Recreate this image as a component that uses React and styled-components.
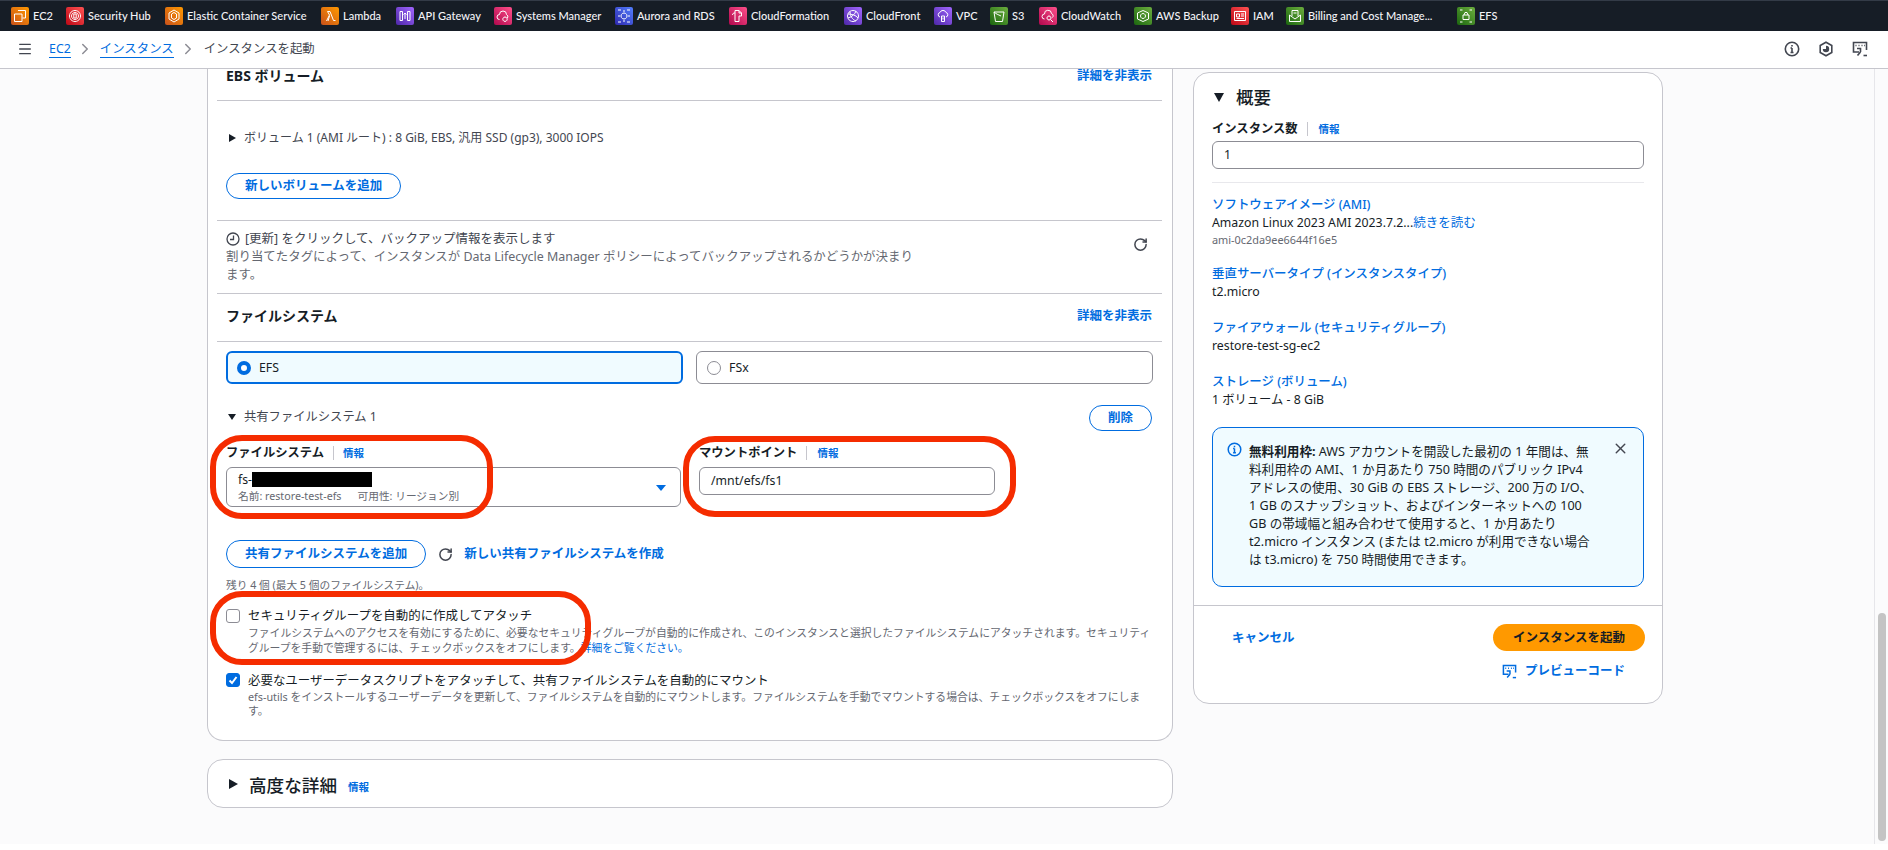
import React from "react";
import styled, { createGlobalStyle } from "styled-components";
import { RotateCw, X, Menu, ChevronRight } from "lucide-react";

const FONT = `"Noto Sans", "Noto Sans CJK JP", sans-serif`;
const Global = createGlobalStyle`
  html, body { margin: 0; padding: 0; background: #fff; }
  body { font-family: ${FONT}; color: #161d26; font-size: 12.3px; line-height: 18px; }
  * { box-sizing: border-box; }
`;

const Page = styled.div`position: relative; width: 1888px; height: 850px; overflow: hidden; background: #fff;`;
const TopBar = styled.div`display: flex; height: 31px; background: #161d26; border-top: 1px solid #333b47; padding-left: 11px; align-items: center;`;
const Service = styled.div`display: flex; align-items: center; gap: 4px; width: ${p => p.$w}px; flex: none; color: #f3f3f7; font: 500 11px/18px Lato, "Noto Sans", sans-serif; white-space: nowrap;`;
const Tile = styled.span`width: 18px; height: 18px; flex: none; border-radius: 2px; display: flex; align-items: center; justify-content: center; background: linear-gradient(45deg, ${p => p.$a}, ${p => p.$b});`;
const Crumbs = styled.div`display: flex; align-items: center; height: 38px; border-bottom: 1px solid #c6c6cd; padding: 0 20px 2px 17px; font-size: 12.4px;`;
const Burger = styled(Menu)`width: 16px; height: 16px; color: #424650; margin-right: 16px;`;
const Crumb = styled.a`color: #006ce0; border-bottom: 1px solid #006ce0; line-height: 17px;`;
const Sep = styled(ChevronRight)`width: 18px; height: 18px; color: #8c8c94; margin: 0 5.5px;`;
const Current = styled.span`color: #424650; margin-left: 1px;`;
const Tools = styled.div`margin-left: auto; display: flex; gap: 18px; color: #424650;`;

const Canvas = styled.div`position: relative; height: 775px; background: #fbfbfc; display: grid; grid-template-columns: 966px 470px; column-gap: 20px; padding-left: 207px; align-items: start;`;
const Track = styled.div`position: absolute; top: 0; right: 0; bottom: 0; width: 14px; border-left: 1px solid #e6e6ea; background: #fbfbfc;`;
const Thumb = styled.div`position: absolute; right: 2px; bottom: 3px; width: 8px; height: 228px; border-radius: 4px; background: #c4c4c4;`;
const Column = styled.div`display: flex; flex-direction: column; gap: 18px;`;
const LeftCard = styled.div`padding: 0 10px 0 9px; height: 672px; background: #fff; border: 1px solid #c6c6cd; border-top: none; border-radius: 0 0 16px 16px;`;
const Section = styled.div`padding: ${p => p.$pad}; border-bottom: ${p => (p.$line ? "1px solid #c6c6cd" : "none")}; height: ${p => p.$h}px;`;
const Between = styled.div`display: flex; justify-content: space-between; align-items: center;`;
const HeadRow = styled(Between)`height: 14px; line-height: 14px;`;
const H3 = styled.div`font-size: 14px; font-weight: 700; line-height: 14px; color: #161d26;`;
const Link = styled.a`color: #006ce0; font-size: 12.5px; font-weight: ${p => p.$bold ? 700 : 400}; white-space: nowrap;`;
const Disc = styled.div`display: flex; align-items: center; gap: 8px; color: #424650; font-size: ${p => p.$size || "12.3px"}; height: 18px; padding-left: ${p => p.$indent || 3}px;`;
const RightTri = styled.span`width: 0; height: 0; flex: none; border-top: ${p => p.$h / 2}px solid transparent; border-bottom: ${p => p.$h / 2}px solid transparent; border-left: ${p => p.$w}px solid #161d26;`;
const DownTri = styled.span`width: 0; height: 0; flex: none; border-left: ${p => p.$w / 2}px solid transparent; border-right: ${p => p.$w / 2}px solid transparent; border-top: ${p => p.$h}px solid #161d26;`;
const Pill = styled.button`display: block; height: ${p => p.$h || 26}px; margin-top: ${p => p.$mt || 0}px; padding: 0 ${p => p.$px || 18}px; border: 1px solid #006ce0; border-radius: 20px; background: #fff; color: #006ce0; font: 700 12.5px/16px ${FONT}; white-space: nowrap;`;
const Grey = styled.div`color: #656871; font-size: ${p => p.$size || "12.45px"}; line-height: ${p => p.$lh || "18px"}; white-space: nowrap; margin-top: ${p => p.$mt || 0}px;`;
const Row = styled.div`display: flex; align-items: center; color: #424650; gap: 5px; height: 18px; font-size: 12.5px;`;
const BackupRefresh = styled(RotateCw)`width: 15px; height: 15px; color: #424650; stroke-width: 2.4px; margin: 7px 4px 0 0; align-self: flex-start;`;
const Tiles = styled.div`display: grid; grid-template-columns: 457px 457px; column-gap: 13px;`;
const Option = styled.div`display: flex; align-items: center; gap: 8px; height: 33px; padding-left: ${p => p.$on ? 9 : 10}px; border-radius: 6px; background: ${p => p.$on ? "#f0fbff" : "#fff"}; border: ${p => p.$on ? "2px solid #006ce0" : "1px solid #8c8c94"}; color: #161d26;`;
const Radio = styled.span`width: 14px; height: 14px; flex: none; border-radius: 50%; background: #fff; border: ${p => p.$on ? "4.5px solid #006ce0" : "1px solid #8c8c94"};`;
const FileHead = styled(Between)`margin-top: 21px;`;
const FileTitle = styled(Disc)`margin-top: -2px;`;
const Fields = styled.div`display: grid; grid-template-columns: 455px 296px; column-gap: 18px; margin-top: 13px;`;
const LabelRow = styled.div`display: flex; align-items: center; height: 18px; margin-bottom: ${p => p.$mb || 5}px;`;
const Label = styled.span`font-size: 12.3px; font-weight: 700; color: #161d26;`;
const Info = styled.a`margin-left: 9px; padding-left: ${p => p.$pl || 11}px; border-left: 1px solid #c6c6cd; color: #006ce0; font-size: 10.5px; font-weight: 700; line-height: 14px;`;
const Select = styled.div`position: relative; height: 40px; border: 1px solid #8c8c94; border-radius: 6px; background: #fff; padding: 3px 0 0 11px;`;
const Value = styled.div`color: #161d26; display: flex; align-items: center; height: 17px; font-size: 12.3px;`;
const Redact = styled.span`display: inline-block; width: 120px; height: 15px; background: #000;`;
const Tag = styled.span`margin-right: 16px;`;
const Caret = styled.span`position: absolute; right: 14px; top: 17px; border-left: 5px solid transparent; border-right: 5px solid transparent; border-top: 6px solid #006ce0;`;
const Input = styled.div`height: 28px; border: 1px solid #8c8c94; border-radius: 6px; background: #fff; padding: 0 11px; line-height: 26px; color: #161d26; font-size: 12.3px;`;
const Actions = styled.div`display: flex; align-items: center; margin-top: 33px;`;
const Refresh = styled(RotateCw)`width: 15px; height: 15px; color: #424650; stroke-width: 2.4px; margin: 0 11px 0 12px;`;
const Check = styled.div`display: flex; gap: 8px; margin-top: ${p => p.$mt}px;`;
const Box = styled.span`width: 14px; height: 14px; margin-top: ${p => p.$mt || 0}px; flex: none; border-radius: 3px; display: flex; align-items: center; justify-content: center; background: ${p => p.$on ? "#006ce0" : "#fff"}; border: 1px solid ${p => p.$on ? "#006ce0" : "#8c8c94"};`;
const CheckText = styled.div`color: #161d26; font-size: 12.45px; line-height: 15px; white-space: nowrap;`;
const Small = styled.div`color: #656871; font-size: 10.8px; line-height: ${p => p.$lh || 15}px; margin-top: 2px;`;
const SmallLink = styled.a`color: #006ce0;`;
const Collapsed = styled.div`height: 49px; display: flex; align-items: center; padding: 0 0 0 21px; gap: 11px; background: #fff; border: 1px solid #c6c6cd; border-radius: 16px;`;
const H2 = styled.span`font-size: 17.6px; line-height: 22px; font-weight: 500; color: #161d26; margin-top: 2px;`;
const Tiny = styled.a`color: #006ce0; font-size: 10.5px; font-weight: 700; margin-top: 7px;`;

const RightCard = styled.div`margin-top: 3px; height: 632px; background: #fff; border: 1px solid #c6c6cd; border-radius: 16px; display: flex; flex-direction: column;`;
const Summary = styled.div`padding: 13px 18px 0; height: 533px; border-bottom: 1px solid #c6c6cd;`;
const SummaryHead = styled.div`display: flex; align-items: center; gap: 12px; padding-left: 2px; height: 22px; margin-bottom: 12px;`;
const SumTitle = styled.span`font-size: 17.5px; font-weight: 500; color: #161d26; line-height: 22px;`;
const Rule = styled.div`height: 1px; background: #e8e8ec; margin: 13px 0 13px;`;
const Spec = styled.div`margin-bottom: ${p => p.$mb}px;`;
const SpecLink = styled.a`display: block; color: #006ce0; font-weight: 500; font-size: 12.45px; line-height: 18px;`;
const SpecValue = styled.div`color: #161d26; font-size: 12.3px; line-height: 18px; white-space: nowrap;`;
const Alert = styled.div`position: relative; display: flex; gap: 7px; height: 160px; margin-top: 18px; padding: 15px 0 0 14px; background: #f0fbff; border: 1px solid #006ce0; border-radius: 10px;`;
const AlertIcon = styled.span`display: block; height: 15px; margin-top: -1px;`;
const AlertText = styled.div`color: #161d26; font-size: 12.6px; line-height: 18px; white-space: nowrap;`;
const Close = styled(X)`position: absolute; right: 14px; top: 12px; width: 17px; height: 17px; color: #424650; stroke-width: 2px;`;
const Foot = styled.div`padding: 18px 17px 0 38px;`;
const Launch = styled.button`height: 27px; width: 152px; border: none; border-radius: 14px; background: #ff9900; color: #161d26; font: 700 12.5px/16px ${FONT};`;
const Preview = styled.div`display: flex; align-items: center; justify-content: flex-end; gap: 8px; padding-right: 20px; margin-top: 11px;`;
const Ring = styled.div`position: absolute; left: ${p => p.$x}px; top: ${p => p.$y}px; width: ${p => p.$w}px; height: ${p => p.$h}px; border: 6px solid #f52c00; border-radius: 32px;`;

const Glyph = ({ d }) => (
  <svg width="14" height="14" viewBox="0 0 14 14" fill="none" stroke="#fff" strokeWidth="1"><path d={d} /></svg>
);
const glyph = {
  ec2: "M5 1.5h7.5V9H9.5M1.5 5H9v7.5H1.5z",
  hub: "M7 1.5a5.5 5.5 0 1 0 .01 0M7 3.5a3.5 3.5 0 1 0 .01 0M5.8 5h2.4v4H5.8z",
  ecs: "M7 1L12 4v6l-5 3-5-3V4zM7 3.5L9.5 5v4L7 10.5 4.5 9V5z",
  lam: "M3.5 12L6.5 6 4.5 2.5H7L10.5 11.5h2M6.5 7L5 12",
  api: "M2 2.5h2.5v9H2zM9.5 2.5H12v9H9.5zM7 4v6M5.5 5.5L7 4l1.5 1.5",
  sm: "M3.5 10.5a2.5 2.5 0 0 1 0-5 3.5 3.5 0 0 1 7 0 2.5 2.5 0 0 1 1 3.5M9 8a2.2 2.2 0 1 0 .01 0",
  aur: "M1 1h3M10 1h3M1 13h3M10 13h3M7 4a3 3 0 1 0 .01 0M1 7h2M11 7h2M7 1v2M7 11v2",
  cfn: "M4 1.5h4l2.5 2.5v3H8v5.5H4zM1.5 6a2 2 0 0 1 2.5-2M8 1.5V4h2.5",
  cfr: "M7 1.5a5.5 5.5 0 1 0 .01 0M2 9c4-1 7-4 8-7M4 2.5c0 4 2 8 6 9.5M2 5c3 0 8 1 10 4",
  vpc: "M4 8a2.3 2.3 0 0 1 0-4.5 3.2 3.2 0 0 1 6 0A2.3 2.3 0 0 1 10 8M5.5 7h3v5.5h-3zM7 8.5v2",
  s3: "M2 3h10l-1.5 9.5h-7zM2 3c2 2 4 2.5 7 4",
  cw: "M3.5 10a2.5 2.5 0 0 1 0-5 3.5 3.5 0 0 1 7-.5 2.5 2.5 0 0 1 1 4M8 7a2 2 0 1 0 .01 0M9.5 10.5l2.5 2.5",
  bak: "M7 1.5L12.5 4v6L7 12.5 1.5 10V4zM7 4.5a2.5 2.5 0 1 0 .01 0",
  iam: "M1.5 2.5h11v9h-11zM3.5 5h3v3h-3zM8 5h3M8 7h3M3.5 9.5h7.5",
  bil: "M1.5 6v6.5h11V6L7 10zM4 7V1.5h6V7M5.5 4h3",
  efs: "M1 1h2.5M10.5 1H13M1 13h2.5M10.5 13H13M4 6h6v4.5H4zM5 6l1-2.5h2L9 6",
};
const services = [
  ["EC2", 55, "#c8511b", "#ff9900", "ec2"],
  ["Security Hub", 99, "#bd0816", "#ff5252", "hub"],
  ["Elastic Container Service", 156, "#c8511b", "#ff9900", "ecs"],
  ["Lambda", 75, "#c8511b", "#ff9900", "lam"],
  ["API Gateway", 98, "#4d27a8", "#a166ff", "api"],
  ["Systems Manager", 121, "#b0084d", "#ff4f8b", "sm"],
  ["Aurora and RDS", 114, "#2e27ad", "#527fff", "aur"],
  ["CloudFormation", 115, "#b0084d", "#ff4f8b", "cfn"],
  ["CloudFront", 90, "#4d27a8", "#a166ff", "cfr"],
  ["VPC", 56, "#4d27a8", "#a166ff", "vpc"],
  ["S3", 49, "#1b660f", "#6cae3e", "s3"],
  ["CloudWatch", 95, "#b0084d", "#ff4f8b", "cw"],
  ["AWS Backup", 97, "#1b660f", "#6cae3e", "bak"],
  ["IAM", 55, "#bd0816", "#ff5252", "iam"],
  ["Billing and Cost Manage...", 171, "#1b660f", "#6cae3e", "bil"],
  ["EFS", 50, "#1b660f", "#6cae3e", "efs"],
];

const InfoCircle = ({ size = 16, color = "#424650" }) => (
  <svg width={size} height={size} viewBox="0 0 16 16" fill="none" stroke={color} strokeWidth="1.6">
    <circle cx="8" cy="8" r="6.7" /><path d="M8 7v4.5M6.5 11.5h3M6.5 7H8" /><path d="M8 4v1.6" />
  </svg>
);
const Hex = () => (
  <svg width="16" height="16" viewBox="0 0 16 16" fill="none" stroke="#424650" strokeWidth="1.6">
    <path d="M8 1.2l5.8 3.3v7L8 14.8l-5.8-3.3v-7z" /><path d="M8 4.8a3.2 3.2 0 1 1-3.2 3.2L8 8z" fill="#424650" stroke="none" />
  </svg>
);
const Shell = ({ color = "#424650", size = 16 }) => (
  <svg width={size} height={size} viewBox="0 0 16 16" fill="none" stroke={color} strokeWidth="1.6">
    <path d="M7 11H1.5V1.5h13V9" /><path d="M3.5 4.5h1M6.5 4.5h1M9.5 4.5h1M12 4.5h.8" />
    <path d="M5 7.5h3.5L8.5 11M8.5 11l-3 3.5" /><path d="M11.5 14.5h3.5" />
  </svg>
);
const Clock = () => (
  <svg width="14" height="14" viewBox="0 0 14 14" fill="none" stroke="#424650" strokeWidth="1.3">
    <circle cx="7" cy="7" r="6" /><path d="M7.5 3.5V7.5H4" />
  </svg>
);
const Tick = () => (
  <svg width="12" height="12" viewBox="0 0 12 12" fill="none" stroke="#fff" strokeWidth="2"><path d="M2.5 6.5L5 9l4.5-6" /></svg>
);

export default function App() {
  return (
    <Page>
      <Global />
      <TopBar>
        {services.map(([name, w, a, b, g]) => (
          <Service key={name} $w={w}>
            <Tile $a={a} $b={b}><Glyph d={glyph[g]} /></Tile>
            {name}
          </Service>
        ))}
      </TopBar>
      <Crumbs>
        <Burger />
        <Crumb>EC2</Crumb>
        <Sep />
        <Crumb>インスタンス</Crumb>
        <Sep />
        <Current>インスタンスを起動</Current>
        <Tools><InfoCircle /><Hex /><Shell /></Tools>
      </Crumbs>
      <Canvas>
        <Column>
          <LeftCard>
            <Section $line $h={32} $pad="0 10px 0 9px">
              <HeadRow>
                <H3>EBS ボリューム</H3>
                <Link $bold>詳細を非表示</Link>
              </HeadRow>
            </Section>
            <Section $line $h={120} $pad="28px 10px 0 9px">
              <Disc $size="12px"><RightTri $w={7} $h={9} />ボリューム 1 (AMI ルート) : 8 GiB, EBS, 汎用 SSD (gp3), 3000 IOPS</Disc>
              <Pill $mt={26}>新しいボリュームを追加</Pill>
            </Section>
            <Section $line $h={73} $pad="9px 10px 0 9px">
              <Between>
                <div>
                  <Row><Clock />[更新] をクリックして、バックアップ情報を表示します</Row>
                  <Grey>割り当てたタグによって、インスタンスが Data Lifecycle Manager ポリシーによってバックアップされるかどうかが決まり<br />ます。</Grey>
                </div>
                <BackupRefresh />
              </Between>
            </Section>
            <Section $line $h={48} $pad="13px 10px 0 9px">
              <Between>
                <H3>ファイルシステム</H3>
                <Link $bold>詳細を非表示</Link>
              </Between>
            </Section>
            <Section $pad="9px 10px 0 9px">
              <Tiles>
                <Option $on><Radio $on />EFS</Option>
                <Option><Radio />FSx</Option>
              </Tiles>
              <FileHead>
                <FileTitle $indent={2}><DownTri $w={8} $h={6.5} />共有ファイルシステム 1</FileTitle>
                <Pill>削除</Pill>
              </FileHead>
              <Fields>
                <div>
                  <LabelRow><Label>ファイルシステム</Label><Info $pl={9}>情報</Info></LabelRow>
                  <Select>
                    <Value>fs-<Redact /></Value>
                    <Grey $size="10.7px" $lh="17px"><Tag>名前: restore-test-efs</Tag>可用性: リージョン別</Grey>
                    <Caret />
                  </Select>
                </div>
                <div>
                  <LabelRow><Label>マウントポイント</Label><Info $pl={10}>情報</Info></LabelRow>
                  <Input>/mnt/efs/fs1</Input>
                </div>
              </Fields>
              <Actions>
                <Pill $h={28}>共有ファイルシステムを追加</Pill>
                <Refresh />
                <Link $bold>新しい共有ファイルシステムを作成</Link>
              </Actions>
              <Grey $size="10.7px" $mt={8}>残り 4 個 (最大 5 個のファイルシステム)。</Grey>
              <Check $mt={14}>
                <Box $mt={1} />
                <CheckText>
                  セキュリティグループを自動的に作成してアタッチ
                  <Small>ファイルシステムへのアクセスを有効にするために、必要なセキュリティグループが自動的に作成され、このインスタンスと選択したファイルシステムにアタッチされます。セキュリティ<br />グループを手動で管理するには、チェックボックスをオフにします。<SmallLink>詳細をご覧ください。</SmallLink></Small>
                </CheckText>
              </Check>
              <Check $mt={18}>
                <Box $on><Tick /></Box>
                <CheckText>
                  必要なユーザーデータスクリプトをアタッチして、共有ファイルシステムを自動的にマウント
                  <Small $lh={14}>efs-utils をインストールするユーザーデータを更新して、ファイルシステムを自動的にマウントします。ファイルシステムを手動でマウントする場合は、チェックボックスをオフにしま<br />す。</Small>
                </CheckText>
              </Check>
            </Section>
          </LeftCard>
          <Collapsed>
            <RightTri $w={9} $h={11} />
            <H2>高度な詳細</H2>
            <Tiny>情報</Tiny>
          </Collapsed>
        </Column>
        <RightCard>
          <Summary>
            <SummaryHead><DownTri $w={10} $h={9} /><SumTitle>概要</SumTitle></SummaryHead>
            <LabelRow $mb={3}><Label>インスタンス数</Label><Info>情報</Info></LabelRow>
            <Input>1</Input>
            <Rule />
            <Spec $mb={18}>
              <SpecLink>ソフトウェアイメージ (AMI)</SpecLink>
              <SpecValue>Amazon Linux 2023 AMI 2023.7.2...<Link>続きを読む</Link></SpecValue>
              <Grey $size="10.9px" $lh="15px">ami-0c2da9ee6644f16e5</Grey>
            </Spec>
            <Spec $mb={18}>
              <SpecLink>垂直サーバータイプ (インスタンスタイプ)</SpecLink>
              <SpecValue>t2.micro</SpecValue>
            </Spec>
            <Spec $mb={18}>
              <SpecLink>ファイアウォール (セキュリティグループ)</SpecLink>
              <SpecValue>restore-test-sg-ec2</SpecValue>
            </Spec>
            <Spec $mb={0}>
              <SpecLink>ストレージ (ボリューム)</SpecLink>
              <SpecValue>1 ボリューム - 8 GiB</SpecValue>
            </Spec>
            <Alert>
              <AlertIcon><InfoCircle size={15} color="#006ce0" /></AlertIcon>
              <AlertText>
                <b>無料利用枠:</b> AWS アカウントを開設した最初の 1 年間は、無<br />
                料利用枠の AMI、1 か月あたり 750 時間のパブリック IPv4<br />
                アドレスの使用、30 GiB の EBS ストレージ、200 万の I/O、<br />
                1 GB のスナップショット、およびインターネットへの 100<br />
                GB の帯域幅と組み合わせて使用すると、1 か月あたり<br />
                t2.micro インスタンス (または t2.micro が利用できない場合<br />
                は t3.micro) を 750 時間使用できます。
              </AlertText>
              <Close />
            </Alert>
          </Summary>
          <Foot>
            <Between>
              <Link $bold>キャンセル</Link>
              <Launch>インスタンスを起動</Launch>
            </Between>
            <Preview><Shell color="#006ce0" size={15} /><Link $bold>プレビューコード</Link></Preview>
          </Foot>
        </RightCard>
        <Track><Thumb /></Track>
      </Canvas>
      <Ring $x={210} $y={435} $w={283} $h={84} />
      <Ring $x={683} $y={436} $w={333} $h={81} />
      <Ring $x={210} $y={591} $w={381} $h={74} />
    </Page>
  );
}
